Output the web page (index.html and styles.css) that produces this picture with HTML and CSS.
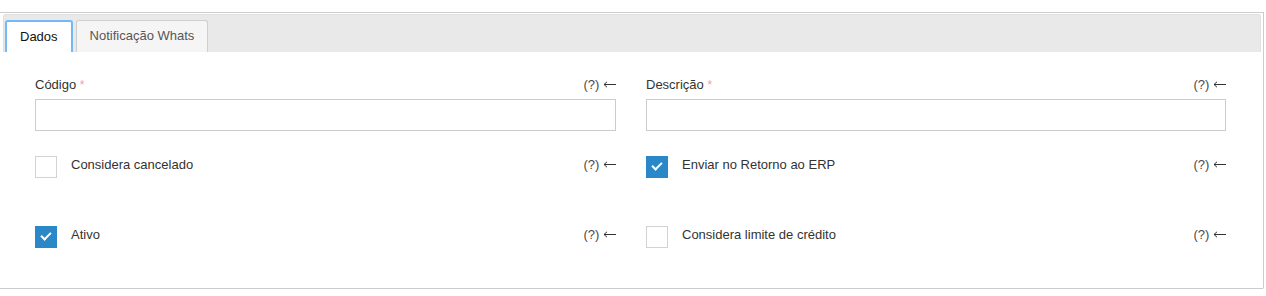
FILE: index.html
```html
<!DOCTYPE html>
<html lang="pt-BR">
<head>
    <meta charset="UTF-8">
    <title>Cadastro</title>
    <link rel="stylesheet" href="styles.css">
</head>
<body>
    <div class="panel">
        <div class="tab-bar">
            <div class="tab active">Dados</div>
            <div class="tab">Notificação Whats</div>
        </div>
        <div class="tab-content">
            <div class="form-grid">
                <div class="field">
                    <div class="field-head">
                        <label>Código <span class="req">*</span></label>
                        <span class="help">(?) <svg class="arrow" width="13" height="7" viewBox="0 0 13 7"><path d="M1 3.5H13M4 0.8L1 3.5L4 6.2" fill="none" stroke="#333" stroke-width="1"/></svg></span>
                    </div>
                    <input type="text" class="text-input">
                </div>
                <div class="field">
                    <div class="field-head">
                        <label>Descrição <span class="req">*</span></label>
                        <span class="help">(?) <svg class="arrow" width="13" height="7" viewBox="0 0 13 7"><path d="M1 3.5H13M4 0.8L1 3.5L4 6.2" fill="none" stroke="#333" stroke-width="1"/></svg></span>
                    </div>
                    <input type="text" class="text-input">
                </div>

                <div class="check-row">
                    <span class="check"></span>
                    <span class="check-label">Considera cancelado</span>
                    <span class="help">(?) <svg class="arrow" width="13" height="7" viewBox="0 0 13 7"><path d="M1 3.5H13M4 0.8L1 3.5L4 6.2" fill="none" stroke="#333" stroke-width="1"/></svg></span>
                </div>
                <div class="check-row">
                    <span class="check checked"></span>
                    <span class="check-label">Enviar no Retorno ao ERP</span>
                    <span class="help">(?) <svg class="arrow" width="13" height="7" viewBox="0 0 13 7"><path d="M1 3.5H13M4 0.8L1 3.5L4 6.2" fill="none" stroke="#333" stroke-width="1"/></svg></span>
                </div>

                <div class="check-row">
                    <span class="check checked"></span>
                    <span class="check-label">Ativo</span>
                    <span class="help">(?) <svg class="arrow" width="13" height="7" viewBox="0 0 13 7"><path d="M1 3.5H13M4 0.8L1 3.5L4 6.2" fill="none" stroke="#333" stroke-width="1"/></svg></span>
                </div>
                <div class="check-row">
                    <span class="check"></span>
                    <span class="check-label">Considera limite de crédito</span>
                    <span class="help">(?) <svg class="arrow" width="13" height="7" viewBox="0 0 13 7"><path d="M1 3.5H13M4 0.8L1 3.5L4 6.2" fill="none" stroke="#333" stroke-width="1"/></svg></span>
                </div>
            </div>
        </div>
    </div>
</body>
</html>
```

FILE: styles.css
```css
body {
    margin: 0;
    font-family: 'Liberation Sans', Arial, sans-serif;
    font-size: 13px;
    color: #333;
    background-color: #fff;
}

.panel {
    margin-top: 12px;
    width: 1258px;
    height: 272px;
    padding: 1px 2px 2px 3px;
    border: 1px solid #ccc;
    border-left: none;
    border-radius: 0 0 2px 0;
}

.tab-bar {
    display: flex;
    gap: 3px;
    height: 32px;
    padding: 5px 0 0 1px;
    background-color: #e9e9e9;
    border: 1px solid #e0e0e0;
    border-bottom: none;
    border-radius: 3px 3px 0 0;
}

.tab {
    height: 32px;
    box-sizing: border-box;
    padding: 0 13px;
    line-height: 30px;
    background-color: #f5f5f5;
    border: 1px solid #cfcfcf;
    border-bottom: none;
    border-radius: 3px 3px 0 0;
    color: #555;
}

.tab.active {
    background-color: #fff;
    color: #111;
    border: 2px solid #74b9f5;
    border-bottom: none;
    padding: 0 13px;
    line-height: 29px;
}

.tab-content {
    padding: 23px 31px 0 32px;
}

.form-grid {
    display: grid;
    grid-template-columns: 581px 580px;
    column-gap: 30px;
}

.field-head {
    display: flex;
    justify-content: space-between;
    line-height: 20px;
    height: 20px;
}

.req {
    color: #f7a19a;
    font-size: 12px;
}

.help {
    color: #4a4a4a;
    white-space: nowrap;
}

.arrow {
    vertical-align: 1px;
}

.text-input {
    display: block;
    margin-top: 4px;
    width: 100%;
    height: 32px;
    box-sizing: border-box;
    border: 1px solid #ccc;
    padding: 0 8px;
    font-family: inherit;
    font-size: 13px;
}

.check-row {
    display: flex;
    align-items: flex-start;
    height: 70px;
    line-height: 18px;
}

.form-grid .check-row:nth-child(3),
.form-grid .check-row:nth-child(4) {
    margin-top: 25px;
}

.check-label {
    flex: 1;
}

.check {
    flex: none;
    width: 22px;
    height: 22px;
    box-sizing: border-box;
    margin-right: 14px;
    border: 1px solid #d3d3d3;
    background-color: #fff;
    position: relative;
}

.check.checked {
    border: none;
    background-color: #2a88c8;
}

.check.checked::after {
    content: '';
    position: absolute;
    left: 6px;
    top: 6px;
    width: 8px;
    height: 4px;
    border-left: 2px solid #fff;
    border-bottom: 2px solid #fff;
    transform: rotate(-45deg);
}
```
